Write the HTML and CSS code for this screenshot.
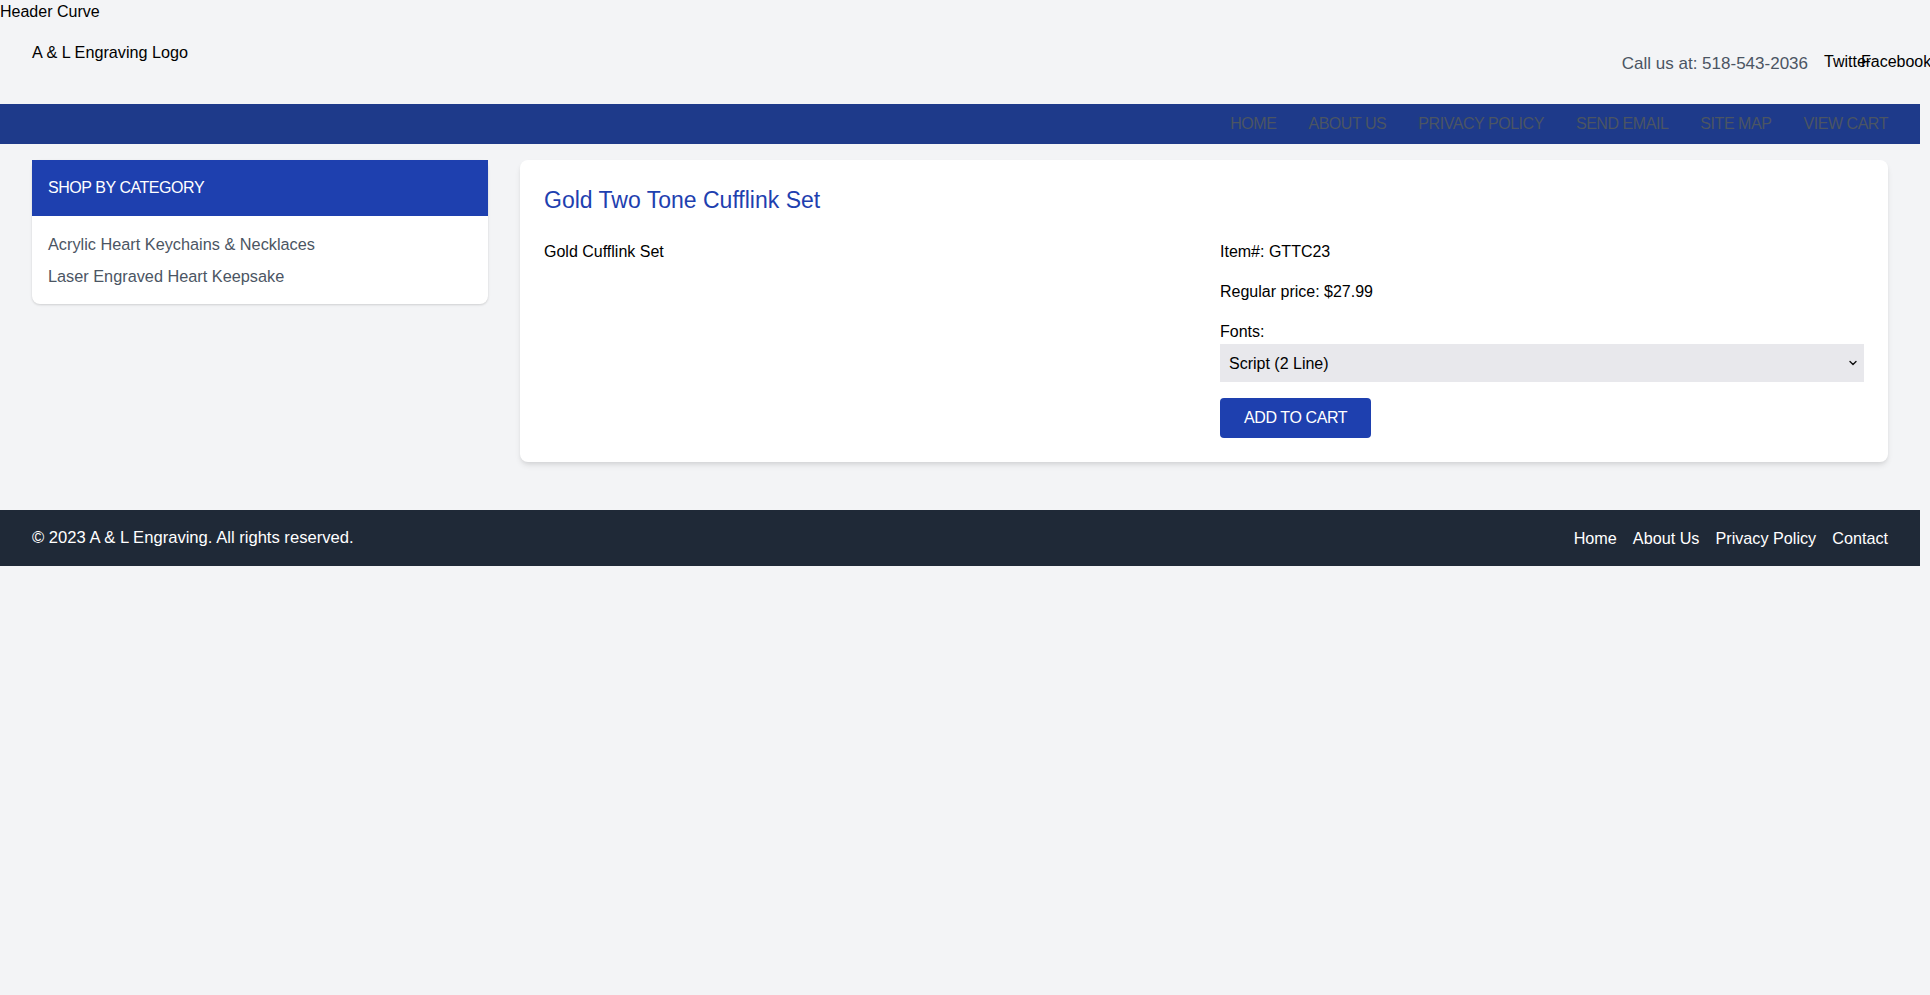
FILE: index.html
```html
<!DOCTYPE html>
<html lang="en">
<head>
<meta charset="utf-8">
<title>Gold Two Tone Cufflink Set - A &amp; L Engraving</title>
<link rel="stylesheet" href="styles.css">
</head>
<body>
<div class="page">
  <div class="curve">Header Curve</div>
  <header class="header">
    <div class="logo">A &amp; L Engraving Logo</div>
    <div class="contact">
      <span class="phone">Call us at: 518-543-2036</span>
      <span class="social">Twitter</span>
      <span class="social">Facebook</span>
    </div>
  </header>
  <nav class="nav">
    <a href="#">HOME</a>
    <a href="#">ABOUT US</a>
    <a href="#">PRIVACY POLICY</a>
    <a href="#">SEND EMAIL</a>
    <a href="#">SITE MAP</a>
    <a href="#">VIEW CART</a>
  </nav>
  <main class="main">
    <aside class="sidebar">
      <div class="sidebar-head">SHOP BY CATEGORY</div>
      <ul class="cat-list">
        <li><a href="#">Acrylic Heart Keychains &amp; Necklaces</a></li>
        <li><a href="#">Laser Engraved Heart Keepsake</a></li>
      </ul>
    </aside>
    <section class="product">
      <h1 class="title">Gold Two Tone Cufflink Set</h1>
      <div class="cols">
        <div class="desc">Gold Cufflink Set</div>
        <div class="info">
          <p class="line">Item#: GTTC23</p>
          <p class="line">Regular price: $27.99</p>
          <label class="label" for="font">Fonts:</label>
          <div class="select-wrap">
            <select id="font" class="select">
              <option>Script (2 Line)</option>
            </select>
            <svg class="chev" width="10" height="10" viewBox="0 0 10 10"><path d="M2 3.5 L5 6.5 L8 3.5" fill="none" stroke="#111" stroke-width="1.4" stroke-linecap="round" stroke-linejoin="round"/></svg>
          </div>
          <button class="btn" type="button">ADD TO CART</button>
        </div>
      </div>
    </section>
  </main>
  <footer class="footer">
    <div class="copy">© 2023 A &amp; L Engraving. All rights reserved.</div>
    <div class="flinks">
      <a href="#">Home</a>
      <a href="#">About Us</a>
      <a href="#">Privacy Policy</a>
      <a href="#">Contact</a>
    </div>
  </footer>
</div>
</body>
</html>
```

FILE: styles.css
```css
* { box-sizing: border-box; }
html, body {
  margin: 0;
  padding: 0;
  background: #f3f4f6;
}
body {
  font-family: "Liberation Sans", Arial, Helvetica, sans-serif;
  font-size: 16px;
  line-height: 24px;
  color: #000;
}
a { text-decoration: none; color: inherit; }
.page { width: 1920px; }

.curve { height: 24px; }

.header {
  display: flex;
  justify-content: space-between;
  align-items: center;
  padding: 16px 32px;
}
.logo {
  height: 48px;
  line-height: 24px;
  font-size: 16.2px;
}
.contact {
  display: flex;
  align-items: center;
}
.phone {
  color: #4b5563;
  font-size: 17px;
  margin-right: 16px;
}
.social {
  display: block;
  width: 27px;
  height: 24px;
  line-height: 20px;
  white-space: nowrap;
  overflow: visible;
}
.social + .social { margin-left: 10px; }

.nav {
  display: flex;
  justify-content: flex-end;
  align-items: center;
  height: 40px;
  background: #1e3a8a;
  padding: 0 16px;
}
.nav a {
  color: #4b5563;
  padding: 0 16px;
  letter-spacing: -0.45px;
  line-height: 24px;
}

.main {
  display: grid;
  grid-template-columns: 1fr 3fr;
  gap: 32px;
  padding: 16px 32px;
  align-items: start;
}
.sidebar {
  background: #fff;
  border-radius: 8px;
  box-shadow: 0 1px 3px rgba(0,0,0,0.1), 0 1px 2px rgba(0,0,0,0.06);
}
.sidebar-head {
  background: #1e40af;
  color: #fff;
  padding: 16px;
  letter-spacing: -0.45px;
}
.cat-list {
  list-style: none;
  margin: 0;
  padding: 16px;
  display: flex;
  flex-direction: column;
  gap: 8px;
}
.cat-list li {
  font-size: 16.3px;
  line-height: 24px;
  color: #4b5563;
}

.product {
  background: #fff;
  border-radius: 8px;
  box-shadow: 0 4px 6px -1px rgba(0,0,0,0.1), 0 2px 4px -1px rgba(0,0,0,0.06);
  padding: 24px;
}
.title {
  margin: 0 0 24px;
  font-size: 23px;
  line-height: 32px;
  font-weight: normal;
  color: #1e40af;
}
.cols {
  display: grid;
  grid-template-columns: 1fr 1fr;
  gap: 32px;
}
.line { margin: 0 0 16px; }
.label { display: block; }
.select-wrap {
  position: relative;
  margin-bottom: 16px;
}
.select {
  display: block;
  width: 100%;
  height: 38px;
  appearance: none;
  -webkit-appearance: none;
  border: none;
  border-radius: 0;
  background: #e8e8ec;
  font-family: inherit;
  font-size: 16px;
  color: #000;
  padding: 0 9px;
}
.chev {
  position: absolute;
  right: 6px;
  top: 14px;
}
.btn {
  display: block;
  height: 40px;
  padding: 0 24px;
  background: #1e40af;
  color: #fff;
  border: none;
  border-radius: 4px;
  font-family: inherit;
  font-size: 16px;
  letter-spacing: -0.4px;
}

.footer {
  margin-top: 32px;
  background: #1f2937;
  color: #fff;
  display: flex;
  justify-content: space-between;
  align-items: center;
  padding: 16px 32px;
}
.copy { font-size: 16.6px; line-height: 24px; }
.flinks {
  display: flex;
  gap: 16px;
  font-size: 16.2px;
  line-height: 24px;
}
```
